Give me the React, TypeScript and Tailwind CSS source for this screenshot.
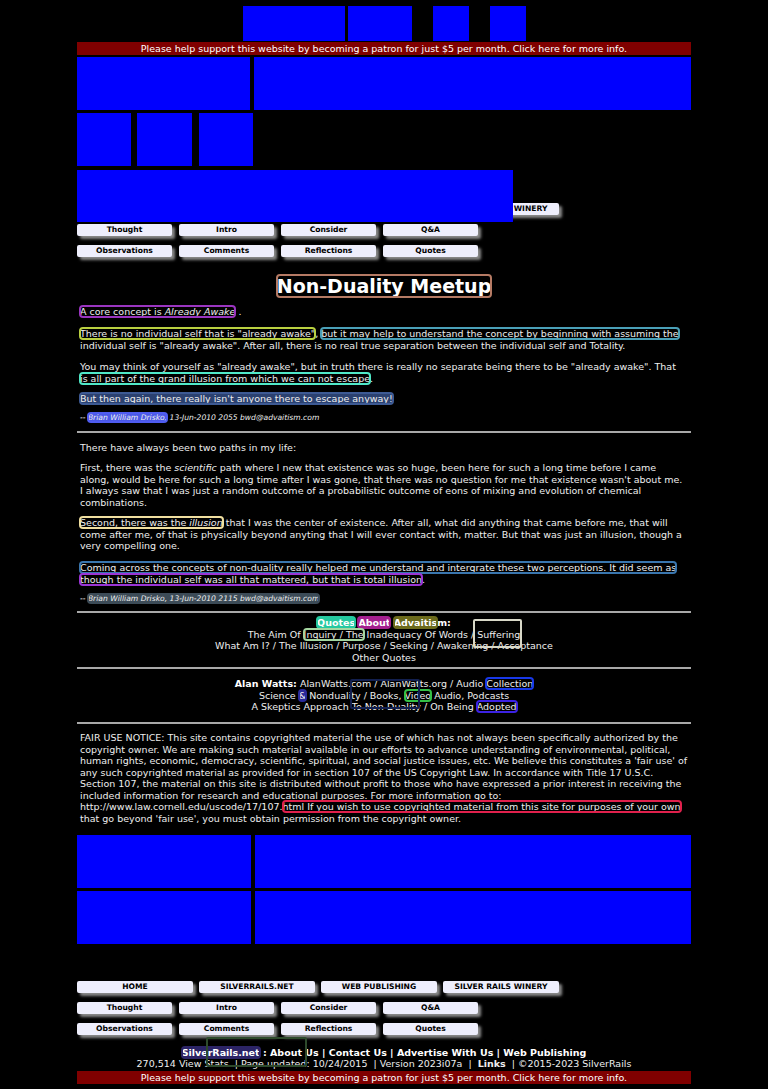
import React from "react";

const B = ({ c, children }: { c: string; children: React.ReactNode }) => (
  <span className={`rounded-[3px] outline-2 outline-offset-[-1px] ${c}`}>{children}</span>
);

const Btn = ({ w, children }: { w: string; children: React.ReactNode }) => (
  <div
    className={`${w} h-[12px] rounded-[2px] bg-[#eeeefc] shadow-[3px_3px_3px_#8a8a8a] flex items-center justify-center text-[7.6px] font-bold text-black leading-none whitespace-nowrap`}
  >
    {children}
  </div>
);

const Blue = ({ c }: { c: string }) => <div className={`bg-[#0000ff] ${c}`} />;

const NavTop = () => (
  <div className="flex gap-[6px]">
    <Btn w="w-[116px]">HOME</Btn>
    <Btn w="w-[116px]">SILVERRAILS.NET</Btn>
    <Btn w="w-[116px]">WEB PUBLISHING</Btn>
    <Btn w="w-[116px]">SILVER RAILS WINERY</Btn>
  </div>
);

const NavRow = ({ items }: { items: string[] }) => (
  <div className="flex gap-[7px]">
    {items.map((t) => (
      <Btn key={t} w="w-[95px]">
        {t}
      </Btn>
    ))}
  </div>
);

const Hr = ({ c }: { c: string }) => <div className={`h-[2px] bg-[#a8a8a8] ${c}`} />;

const Banner = ({ c }: { c: string }) => (
  <div className={`h-[13px] bg-[#800000] text-center text-[9.5px] leading-[13px] text-white ${c}`}>
    Please help support this website by becoming a patron for just $5 per month. Click here for more info.
  </div>
);

export default function App() {
  return (
    <div className="min-h-screen bg-black font-['DejaVu_Sans',sans-serif] text-[#eeeeee]">
      <div className="w-[614px] mx-auto">
        <div className="flex justify-center pt-[6px]">
          <Blue c="w-[102px] h-[35px]" />
          <Blue c="w-[64px] h-[35px] ml-[3px]" />
          <Blue c="w-[36px] h-[35px] ml-[21px]" />
          <Blue c="w-[36px] h-[35px] ml-[21px]" />
        </div>
        <Banner c="mt-[1px]" />
        <div className="flex gap-[4px] mt-[2px]">
          <Blue c="w-[173px] h-[53px]" />
          <Blue c="flex-1 h-[53px]" />
        </div>
        <div className="flex mt-[3px]">
          <Blue c="w-[54px] h-[53px]" />
          <Blue c="w-[55px] h-[53px] ml-[6px]" />
          <Blue c="w-[54px] h-[53px] ml-[7px]" />
        </div>
        <div className="relative z-10 mt-[4px] w-[436px] h-[52px] bg-[#0000ff]" />
        <div className="mt-[-19px]">
          <NavTop />
        </div>
        <div className="mt-[9px]">
          <NavRow items={["Thought", "Intro", "Consider", "Q&A"]} />
        </div>
        <div className="mt-[9px]">
          <NavRow items={["Observations", "Comments", "Reflections", "Quotes"]} />
        </div>

        <h1 className="mt-[18px] text-center text-[19px] leading-[22px] font-bold text-white">
          <B c="outline-[#b57a64]">Non-Duality Meetup</B>
        </h1>

        <div className="px-[3px] text-[9.5px] leading-[11.5px] whitespace-nowrap">
          <p className="mt-[9.25px]">
            <B c="outline-[#9a35c0]">
              A core concept is <i>Already Awake</i>
            </B>{" "}
            .
          </p>
          <p className="mt-[10.5px]">
            <B c="outline-[#b9d040]">There is no individual self that is "already awake"</B>,{" "}
            <B c="outline-[#4aa0b8]">but it may help to understand the concept by beginning with assuming the</B>
            <br />
            individual self is "already awake". After all, there is no real true separation between the individual self and
            Totality.
          </p>
          <p className="mt-[10px]">
            You may think of yourself as "already awake", but in truth there is really no separate being there to be "already
            awake". That
            <br />
            <B c="outline-[#50e8c8]">is all part of the grand illusion from which we can not escape</B>.
          </p>
          <p className="mt-[9px]">
            <B c="outline-[#3d5a94] bg-[#2b4170]">But then again, there really isn't anyone there to escape anyway!</B>
          </p>
          <p className="mt-[8.25px] text-[7.6px] leading-[10px] italic">
            -- <B c="outline-[#4f5cf0] bg-[#4a58e6]">Brian William Drisko,</B> 13-Jun-2010 2055 bwd@advaitism.com
          </p>
        </div>

        <Hr c="mt-[7.5px]" />

        <div className="px-[3px] text-[9.5px] leading-[11.5px] whitespace-nowrap">
          <p className="mt-[9.75px]">There have always been two paths in my life:</p>
          <p className="mt-[8.5px]">
            First, there was the <i>scientific</i> path where I new that existence was so huge, been here for such a long time
            before I came
            <br />
            along, would be here for such a long time after I was gone, that there was no question for me that existence
            wasn't about me.
            <br />
            I always saw that I was just a random outcome of a probabilistic outcome of eons of mixing and evolution of
            chemical
            <br />
            combinations.
          </p>
          <p className="mt-[9px]">
            <B c="outline-[#f0dfa0]">
              Second, there was the <i>illusion</i>
            </B>{" "}
            that I was the center of existence. After all, what did anything that came before me, that will
            <br />
            come after me, of that is physically beyond anyting that I will ever contact with, matter. But that was just an
            illusion, though a
            <br />
            very compelling one.
          </p>
          <p className="mt-[10.5px]">
            <B c="outline-[#3a76ae]">
              Coming across the concepts of non-duality really helped me understand and intergrate these two perceptions. It
              did seem as
            </B>
            <br />
            <B c="outline-[#9b35d6]">though the individual self was all that mattered, but that is total illusion</B>.
          </p>
          <p className="mt-[8.75px] text-[7.6px] leading-[10px] italic">
            -- <B c="outline-[#3c4b57] bg-[#3c4b57]">Brian William Drisko, 13-Jun-2010 2115 bwd@advaitism.com</B>
          </p>
        </div>

        <Hr c="mt-[6.5px]" />

        <div className="relative mt-[4.75px] text-center text-[9.5px] leading-[11.5px] whitespace-nowrap">
          <p className="font-bold text-white">
            <B c="outline-[#25c9a0] bg-[#25c9a0]">Quotes</B> <B c="outline-[#a31f8e] bg-[#a31f8e]">About</B>{" "}
            <B c="outline-[#6b6a1c] bg-[#6b6a1c]">Advaitis</B>m:
          </p>
          <p>
            The Aim Of <B c="outline-[#a5d6a0]">Inquiry / The</B> Inadequacy Of Words / Suffering
          </p>
          <p>What Am I? / The Illusion / Purpose / Seeking / Awakening / Acceptance</p>
          <p>Other Quotes</p>
          <div className="absolute left-[396px] top-[1.75px] w-[49px] h-[29px] border-2 border-[#d8d8c8] rounded-[2px]" />
        </div>

        <Hr c="mt-[3.25px]" />

        <div className="relative mt-[9.75px] text-center text-[9.5px] leading-[11.5px] whitespace-nowrap">
          <p>
            <b className="text-white">Alan Watts:</b> AlanWatts.com / AlanWatts.org / Audio{" "}
            <B c="outline-[#1838e8]">Collection</B>
          </p>
          <p>
            Science <B c="outline-[#2a2a9a] bg-[#2a2a9a]">&amp;</B> Nonduality / Books, <B c="outline-[#34c046]">Video</B>{" "}
            Audio, Podcasts
          </p>
          <p>
            A Skeptics Approach To Non-Duality / On Being <B c="outline-[#3c22e4]">Adopted</B>
          </p>
          <div className="absolute left-[273px] top-[0.75px] w-[70px] h-[30px] border-2 border-[#132050] rounded-[2px]" />
        </div>

        <Hr c="mt-[8.75px]" />

        <div className="px-[3px] mt-[8.75px] text-[9.5px] leading-[11.5px] whitespace-nowrap">
          <p>
            FAIR USE NOTICE: This site contains copyrighted material the use of which has not always been specifically
            authorized by the
            <br />
            copyright owner. We are making such material available in our efforts to advance understanding of environmental,
            political,
            <br />
            human rights, economic, democracy, scientific, spiritual, and social justice issues, etc. We believe this
            constitutes a 'fair use' of
            <br />
            any such copyrighted material as provided for in section 107 of the US Copyright Law. In accordance with Title 17
            U.S.C.
            <br />
            Section 107, the material on this site is distributed without profit to those who have expressed a prior interest
            in receiving the
            <br />
            included information for research and educational purposes. For more information go to:
            <br />
            http://www.law.cornell.edu/uscode/17/107.
            <B c="outline-[#e0204c]">html If you wish to use copyrighted material from this site for purposes of your own</B>
            <br />
            that go beyond 'fair use', you must obtain permission from the copyright owner.
          </p>
        </div>

        <div className="flex gap-[4px] mt-[10.75px]">
          <Blue c="w-[174px] h-[53px]" />
          <Blue c="flex-1 h-[53px]" />
        </div>
        <div className="flex gap-[4px] mt-[3px]">
          <Blue c="w-[174px] h-[53px]" />
          <Blue c="flex-1 h-[53px]" />
        </div>

        <div className="mt-[37px]">
          <NavTop />
        </div>
        <div className="mt-[9px]">
          <NavRow items={["Thought", "Intro", "Consider", "Q&A"]} />
        </div>
        <div className="mt-[9px]">
          <NavRow items={["Observations", "Comments", "Reflections", "Quotes"]} />
        </div>

        <div className="relative mt-[11.75px] text-center text-[9.5px] leading-[11.5px] whitespace-nowrap">
          <p className="font-bold text-white">
            <B c="outline-[#2c2466] bg-[#2c2466]">SilverRails.net</B> : About Us | Contact Us | Advertise With Us | Web
            Publishing
          </p>
          <p>
            270,514 View Stats &nbsp;| Page updated: 10/24/2015 &nbsp;| Version 2023i07a &nbsp;| &nbsp;<b>Links</b> &nbsp;|
            ©2015-2023 SilverRails
          </p>
          <div className="absolute left-[129px] top-[-9.75px] w-[101px] h-[30px] border-2 border-[#2e4a2c] rounded-[2px]" />
        </div>
        <Banner c="mt-[1.25px]" />
      </div>
    </div>
  );
}
